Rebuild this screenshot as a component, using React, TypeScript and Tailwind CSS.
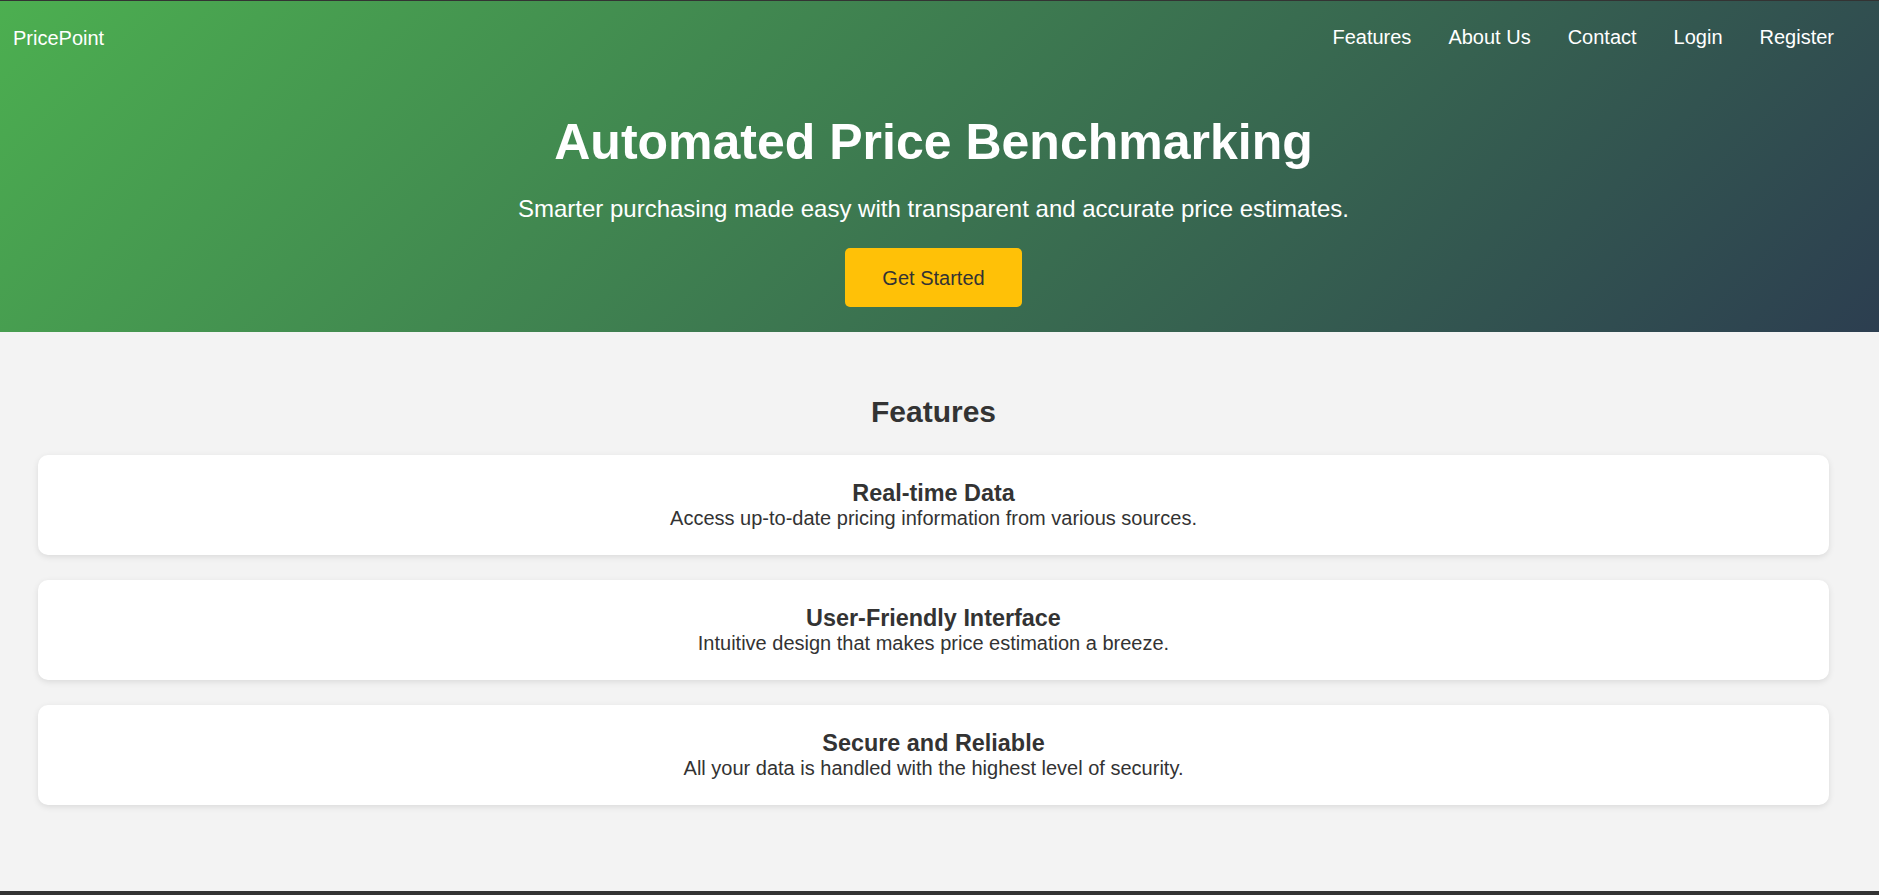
const navLinks = ["Features", "About Us", "Contact", "Login", "Register"];

const features = [
  {
    title: "Real-time Data",
    text: "Access up-to-date pricing information from various sources.",
  },
  {
    title: "User-Friendly Interface",
    text: "Intuitive design that makes price estimation a breeze.",
  },
  {
    title: "Secure and Reliable",
    text: "All your data is handled with the highest level of security.",
  },
];

function Header() {
  return (
    <header className="h-[332px] border-t border-[#333] bg-[linear-gradient(135deg,#4caf50,#2c3e50)] text-white">
      <nav className="flex h-[74px] items-center justify-between pl-[13px] pr-[45px]">
        <div className="text-[20px] leading-[24px]">PricePoint</div>
        <ul className="flex gap-[37px]">
          {navLinks.map((link) => (
            <li key={link}>
              <a href="#" className="text-[20px] leading-[24px] text-white">
                {link}
              </a>
            </li>
          ))}
        </ul>
      </nav>
      <div className="flex flex-col items-center pl-[38px] pr-[50px] text-center">
        <h1 className="mt-[39px] text-[50px] font-bold leading-[56px]">
          Automated Price Benchmarking
        </h1>
        <p className="mt-[25px] text-[24px] leading-[28px]">
          Smarter purchasing made easy with transparent and accurate price estimates.
        </p>
        <a
          href="#"
          className="mt-[25px] flex h-[59px] w-[177px] items-center justify-center rounded-[5px] bg-[#ffc107] text-[20px] text-[#333]"
        >
          Get Started
        </a>
      </div>
    </header>
  );
}

export default function App() {
  return (
    <div className="min-h-screen bg-[#f3f3f3] font-['Liberation_Sans',Arial,sans-serif] text-[#333]">
      <Header />
      <section className="pb-[86px] pl-[38px] pr-[50px] pt-[62px]">
        <h2 className="mb-[25px] text-center text-[30px] font-bold leading-[36px]">
          Features
        </h2>
        <div className="flex flex-col gap-[25px]">
          {features.map((f) => (
            <div
              key={f.title}
              className="flex h-[100px] flex-col items-center justify-center rounded-[10px] bg-white text-center shadow-[0_2px_6px_rgba(0,0,0,0.1)]"
            >
              <h3 className="text-[23.4px] font-bold leading-[27px]">{f.title}</h3>
              <p className="text-[20px] leading-[23px]">{f.text}</p>
            </div>
          ))}
        </div>
      </section>
      <footer className="bg-[#333] py-[24px] text-center text-[16px] text-white">
        &copy; 2024 PricePoint. All rights reserved.
      </footer>
    </div>
  );
}
